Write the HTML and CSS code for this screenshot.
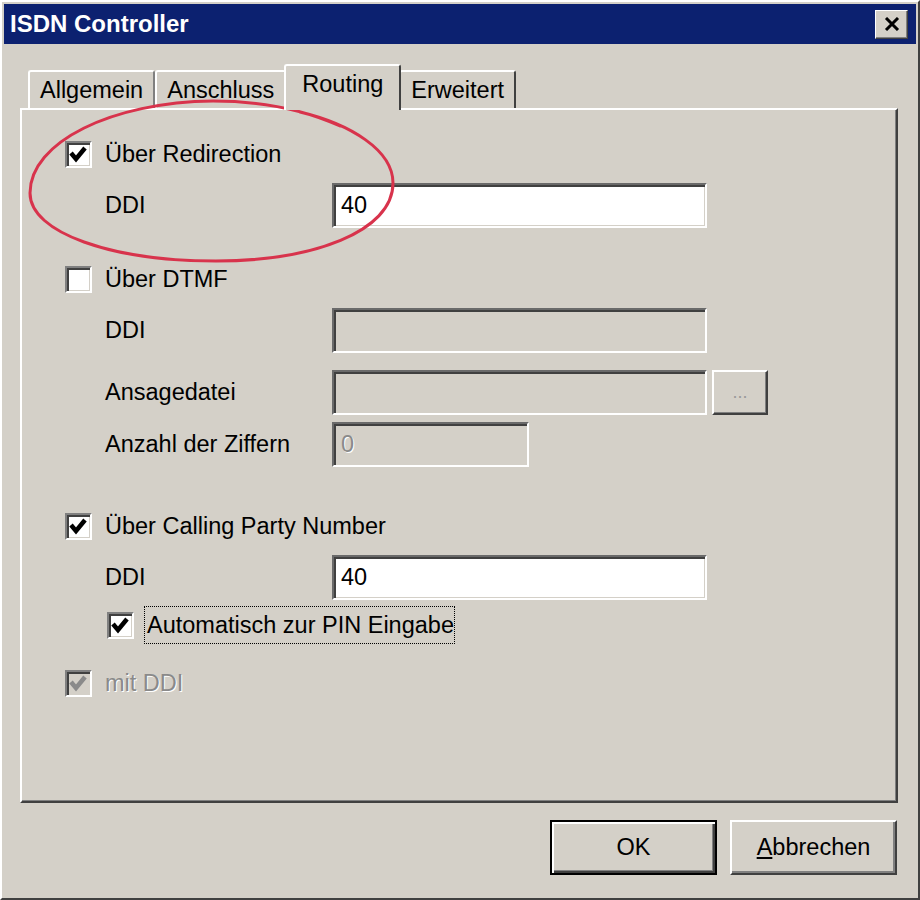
FILE: index.html
```html
<!DOCTYPE html>
<html>
<head>
  <title>ISDN Controller</title>
  <link rel="stylesheet" href="styles.css">
</head>
<body>
  <div class="window">
    <div class="titlebar">
      <span class="title">ISDN Controller</span>
      <span class="close-btn">
        <svg width="16" height="14" viewBox="0 0 16 14"><path d="M2 1 L14 13 M14 1 L2 13" stroke="#000" stroke-width="3" fill="none"/></svg>
      </span>
    </div>

    <div class="tabs">
      <div class="tab">Allgemein</div>
      <div class="tab">Anschluss</div>
      <div class="tab active">Routing</div>
      <div class="tab last">Erweitert</div>
    </div>

    <div class="panel">
      <div class="check-row first">
        <span class="box"><svg viewBox="0 0 23 23"><path d="M4 10 L9 16 L18 5" stroke="#000" stroke-width="4.5" fill="none"/></svg></span>
        <span>Über Redirection</span>
      </div>
      <div class="field-row gap-s">
        <span class="label">DDI</span>
        <span class="input">40</span>
      </div>

      <div class="check-row gap-l">
        <span class="box"></span>
        <span>Über DTMF</span>
      </div>
      <div class="field-row gap-s">
        <span class="label">DDI</span>
        <span class="input disabled"></span>
      </div>
      <div class="field-row gap-m">
        <span class="label">Ansagedatei</span>
        <span class="input disabled"></span>
        <span class="dots-btn">...</span>
      </div>
      <div class="field-row gap-xs">
        <span class="label">Anzahl der Ziffern</span>
        <span class="input disabled short"><span class="grey-text">0</span></span>
      </div>

      <div class="check-row gap-xl">
        <span class="box"><svg viewBox="0 0 23 23"><path d="M4 10 L9 16 L18 5" stroke="#000" stroke-width="4.5" fill="none"/></svg></span>
        <span>Über Calling Party Number</span>
      </div>
      <div class="field-row gap-s">
        <span class="label">DDI</span>
        <span class="input">40</span>
      </div>
      <div class="check-row sub gap-xs">
        <span class="box"><svg viewBox="0 0 23 23"><path d="M4 10 L9 16 L18 5" stroke="#000" stroke-width="4.5" fill="none"/></svg></span>
        <span class="focus">Automatisch zur PIN Eingabe</span>
      </div>

      <div class="check-row gap-m2">
        <span class="box off"><svg viewBox="0 0 23 23"><path d="M4 10 L9 16 L18 5" stroke="#8a8a8a" stroke-width="4.5" fill="none"/></svg></span>
        <span class="grey-text">mit DDI</span>
      </div>
    </div>

    <div class="buttons">
      <div class="btn default">OK</div>
      <div class="btn"><u>A</u>bbrechen</div>
    </div>

    <!-- red marker drawn over the dialog -->
    <svg class="marker" width="920" height="900" viewBox="0 0 920 900">
      <path d="M300 112 C350 124 393 150 393 183 C393 232 312 261 216 261 C112 261 30 233 30 193 C30 142 112 102 213 101 C262 101 305 110 340 126" stroke="#d8334c" stroke-width="3" fill="none" stroke-linecap="round"/>
    </svg>
  </div>
</body>
</html>
```

FILE: styles.css
```css
body {
  margin: 0;
  background: #d4d0c8;
  font-family: "Liberation Sans", Arial, sans-serif;
  font-size: 23.5px;
  color: #000;
}

.window {
  position: relative;
  width: 920px;
  height: 900px;
  box-sizing: border-box;
  border: 2px solid;
  border-color: #fff #404040 #404040 #fff;
  padding: 2px;
  background: #d4d0c8;
}

.titlebar {
  height: 40px;
  background: #0c2170;
  display: flex;
  align-items: center;
  justify-content: space-between;
  padding: 0 8px 0 6px;
}

.title {
  color: #fff;
  font-weight: bold;
  font-size: 24px;
}

.close-btn {
  width: 33px;
  height: 29px;
  box-sizing: border-box;
  background: #d4d0c8;
  border: 1px solid;
  border-color: #fff #404040 #404040 #fff;
  box-shadow: inset -1px -1px #808080;
  display: flex;
  align-items: center;
  justify-content: center;
}

/* tabs */
.tabs {
  display: flex;
  align-items: flex-end;
  height: 44px;
  margin: 20px 0 0 24px;
}

.tab {
  height: 38px;
  box-sizing: border-box;
  padding: 0 10px;
  display: flex;
  align-items: center;
  border-top: 2px solid #fff;
  border-left: 2px solid #fff;
  border-right: 2px solid #808080;
  border-radius: 3px 3px 0 0;
}

.tab.last {
  border-right-color: #404040;
}

.tab.active {
  position: relative;
  z-index: 1;
  height: 46px;
  margin: 0 -2px -2px;
  padding: 0 16px 8px;
  background: #d4d0c8;
  border-right-color: #404040;
}

.panel {
  height: 695px;
  box-sizing: border-box;
  margin: 0 18px 0 16px;
  padding: 26px 0 0 43px;
  border: 2px solid;
  border-color: #fff #404040 #404040 #fff;
  box-shadow: inset -1px -1px #808080;
}

/* rows */
.check-row {
  display: flex;
  align-items: center;
  height: 36px;
}

.check-row.sub {
  padding-left: 42px;
}

.field-row {
  display: flex;
  align-items: center;
  height: 45px;
  padding-left: 40px;
}

.gap-xs { margin-top: 7px; }
.gap-s { margin-top: 11px; }
.gap-m { margin-top: 17px; }
.gap-m2 { margin-top: 22px; }
.gap-l { margin-top: 33px; }
.gap-xl { margin-top: 41px; }

.label {
  width: 227px;
}

.box {
  width: 27px;
  height: 27px;
  box-sizing: border-box;
  margin-right: 13px;
  background: #fff;
  border: 2px solid;
  border-color: #808080 #fff #fff #808080;
  box-shadow: inset 2px 2px #404040, inset -1px -1px #d4d0c8;
}

.box svg {
  display: block;
  width: 23px;
  height: 23px;
}

.box.off {
  background: #d4d0c8;
}

.focus {
  border: 1px dotted #000;
  padding: 5px 0 4px 2px;
  margin-left: -3px;
}

.input {
  width: 375px;
  height: 45px;
  box-sizing: border-box;
  background: #fff;
  border: 2px solid;
  border-color: #6a6a6a #fff #fff #6a6a6a;
  box-shadow: inset 2px 2px #404040, inset -1px -1px #d4d0c8;
  display: flex;
  align-items: center;
  padding-left: 7px;
}

.input.disabled {
  background: #d4d0c8;
}

.input.short {
  width: 197px;
}

.grey-text {
  color: #8a8a8a;
  text-shadow: 1px 1px #fff;
}

.dots-btn {
  width: 56px;
  height: 45px;
  box-sizing: border-box;
  margin-left: 5px;
  border: 2px solid;
  border-color: #fff #404040 #404040 #fff;
  box-shadow: inset -1px -1px #808080;
  display: flex;
  align-items: center;
  justify-content: center;
  color: #9a9a9a;
  font-size: 18px;
}

/* bottom buttons */
.buttons {
  display: flex;
  justify-content: flex-end;
  gap: 13px;
  margin-top: 17px;
  padding-right: 19px;
}

.btn {
  width: 167px;
  height: 55px;
  box-sizing: border-box;
  border: 2px solid;
  border-color: #fff #404040 #404040 #fff;
  box-shadow: inset -2px -2px #808080;
  display: flex;
  align-items: center;
  justify-content: center;
}

.btn.default {
  border-color: #000;
  box-shadow: inset 2px 2px #fff, inset -2px -2px #404040, inset -3px -3px #808080;
}

.marker {
  position: absolute;
  left: -2px;
  top: -2px;
  pointer-events: none;
}
```
